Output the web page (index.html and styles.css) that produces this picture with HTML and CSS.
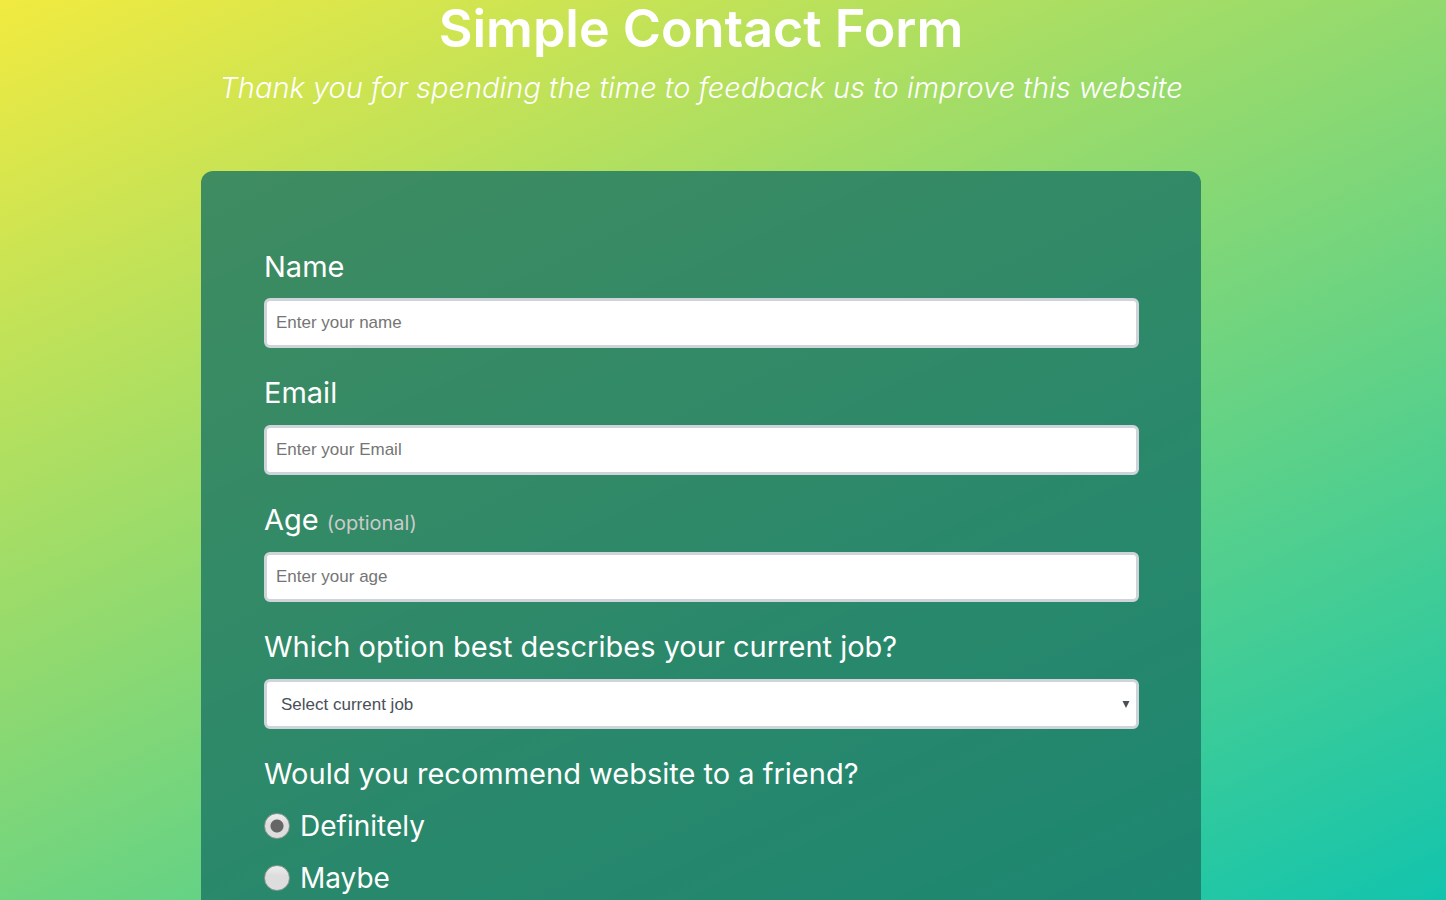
FILE: index.html
```html
<!DOCTYPE html>
<html lang="en">
<head>
<meta charset="utf-8">
<meta name="viewport" content="width=device-width, initial-scale=1">
<title>Simple Contact Form</title>
<link rel="stylesheet" href="styles.css">
</head>
<body>
<main class="page">
  <header class="header">
    <h1 class="title">Simple Contact Form</h1>
    <p class="description">Thank you for spending the time to feedback us to improve this website</p>
  </header>
  <form class="card">
    <div class="group">
      <label class="label" for="name">Name</label>
      <input class="control" id="name" type="text" placeholder="Enter your name">
    </div>
    <div class="group">
      <label class="label" for="email">Email</label>
      <input class="control" id="email" type="email" placeholder="Enter your Email">
    </div>
    <div class="group">
      <label class="label" for="age">Age <span class="clue">(optional)</span></label>
      <input class="control" id="age" type="number" placeholder="Enter your age">
    </div>
    <div class="group">
      <label class="label" for="job">Which option best describes your current job?</label>
      <select class="control select" id="job">
        <option>Select current job</option>
      </select>
    </div>
    <fieldset class="group choices">
      <legend class="label">Would you recommend website to a friend?</legend>
      <label class="choice"><input class="radio" type="radio" name="recommend" checked>Definitely</label>
      <label class="choice"><input class="radio" type="radio" name="recommend">Maybe</label>
    </fieldset>
  </form>
</main>
</body>
</html>
```
FILE: styles.css
```css
* {
  box-sizing: border-box;
}

html {
  scrollbar-width: none;
}

body {
  margin: 0;
  color: #fff;
  font-family: Inter, "Open Sans", sans-serif;
  font-size: 28px;
  line-height: 40px;
  background: linear-gradient(155deg, #f1ea40, #12c4ad) fixed;
}

.page {
  padding-right: 44px;
}

.header {
  margin-bottom: 63px;
  text-align: center;
}

.title {
  margin: 0;
  padding-bottom: 10px;
  font-size: 52px;
  font-weight: 600;
  line-height: 58px;
}

.description {
  margin: 0;
  font-size: 29px;
  font-style: italic;
  font-weight: 300;
}

.card {
  max-width: 1000px;
  margin: 0 auto;
  padding: 76px 62px 63px 63px;
  border-radius: 12px;
  background: rgba(27, 118, 100, 0.8);
}

.group {
  margin: 0 0 25px;
  padding: 0;
  border: 0;
}

.label {
  display: block;
  margin-bottom: 11px;
  padding: 0;
  font-size: 29px;
}

.clue {
  color: #cbcbcb;
  font-size: 20px;
  line-height: 20px;
}

.control {
  display: block;
  width: 100%;
  height: 50px;
  padding: 6px 9px;
  border: 3px solid #ced4da;
  border-radius: 6px;
  background: #fff;
  color: #495057;
  font-family: "Liberation Sans", Arial, sans-serif;
  font-size: 17px;
}

.control::placeholder {
  color: #757575;
}

.control[type="number"] {
  appearance: textfield;
}

.group + .group .label {
  margin-bottom: 12px;
}

.select {
  padding-left: 14px;
  appearance: none;
  background: #fff url("data:image/svg+xml,%3Csvg xmlns='http://www.w3.org/2000/svg' width='8' height='7'%3E%3Cpath d='M0.5 0h7L4 7z' fill='%23495057'/%3E%3C/svg%3E") no-repeat right 6px center;
}

.choice {
  display: flex;
  align-items: center;
  gap: 10px;
  margin-bottom: 12px;
}

.radio {
  width: 26px;
  height: 26px;
  margin: 0;
  border: 1px solid #8b9692;
  border-radius: 50%;
  appearance: none;
  background: linear-gradient(#eee, #ddd 40%, #ddd);
}

.radio:checked {
  background: radial-gradient(circle, #666 6px, transparent 7px), linear-gradient(#eee, #ddd 40%, #ddd);
}
```
